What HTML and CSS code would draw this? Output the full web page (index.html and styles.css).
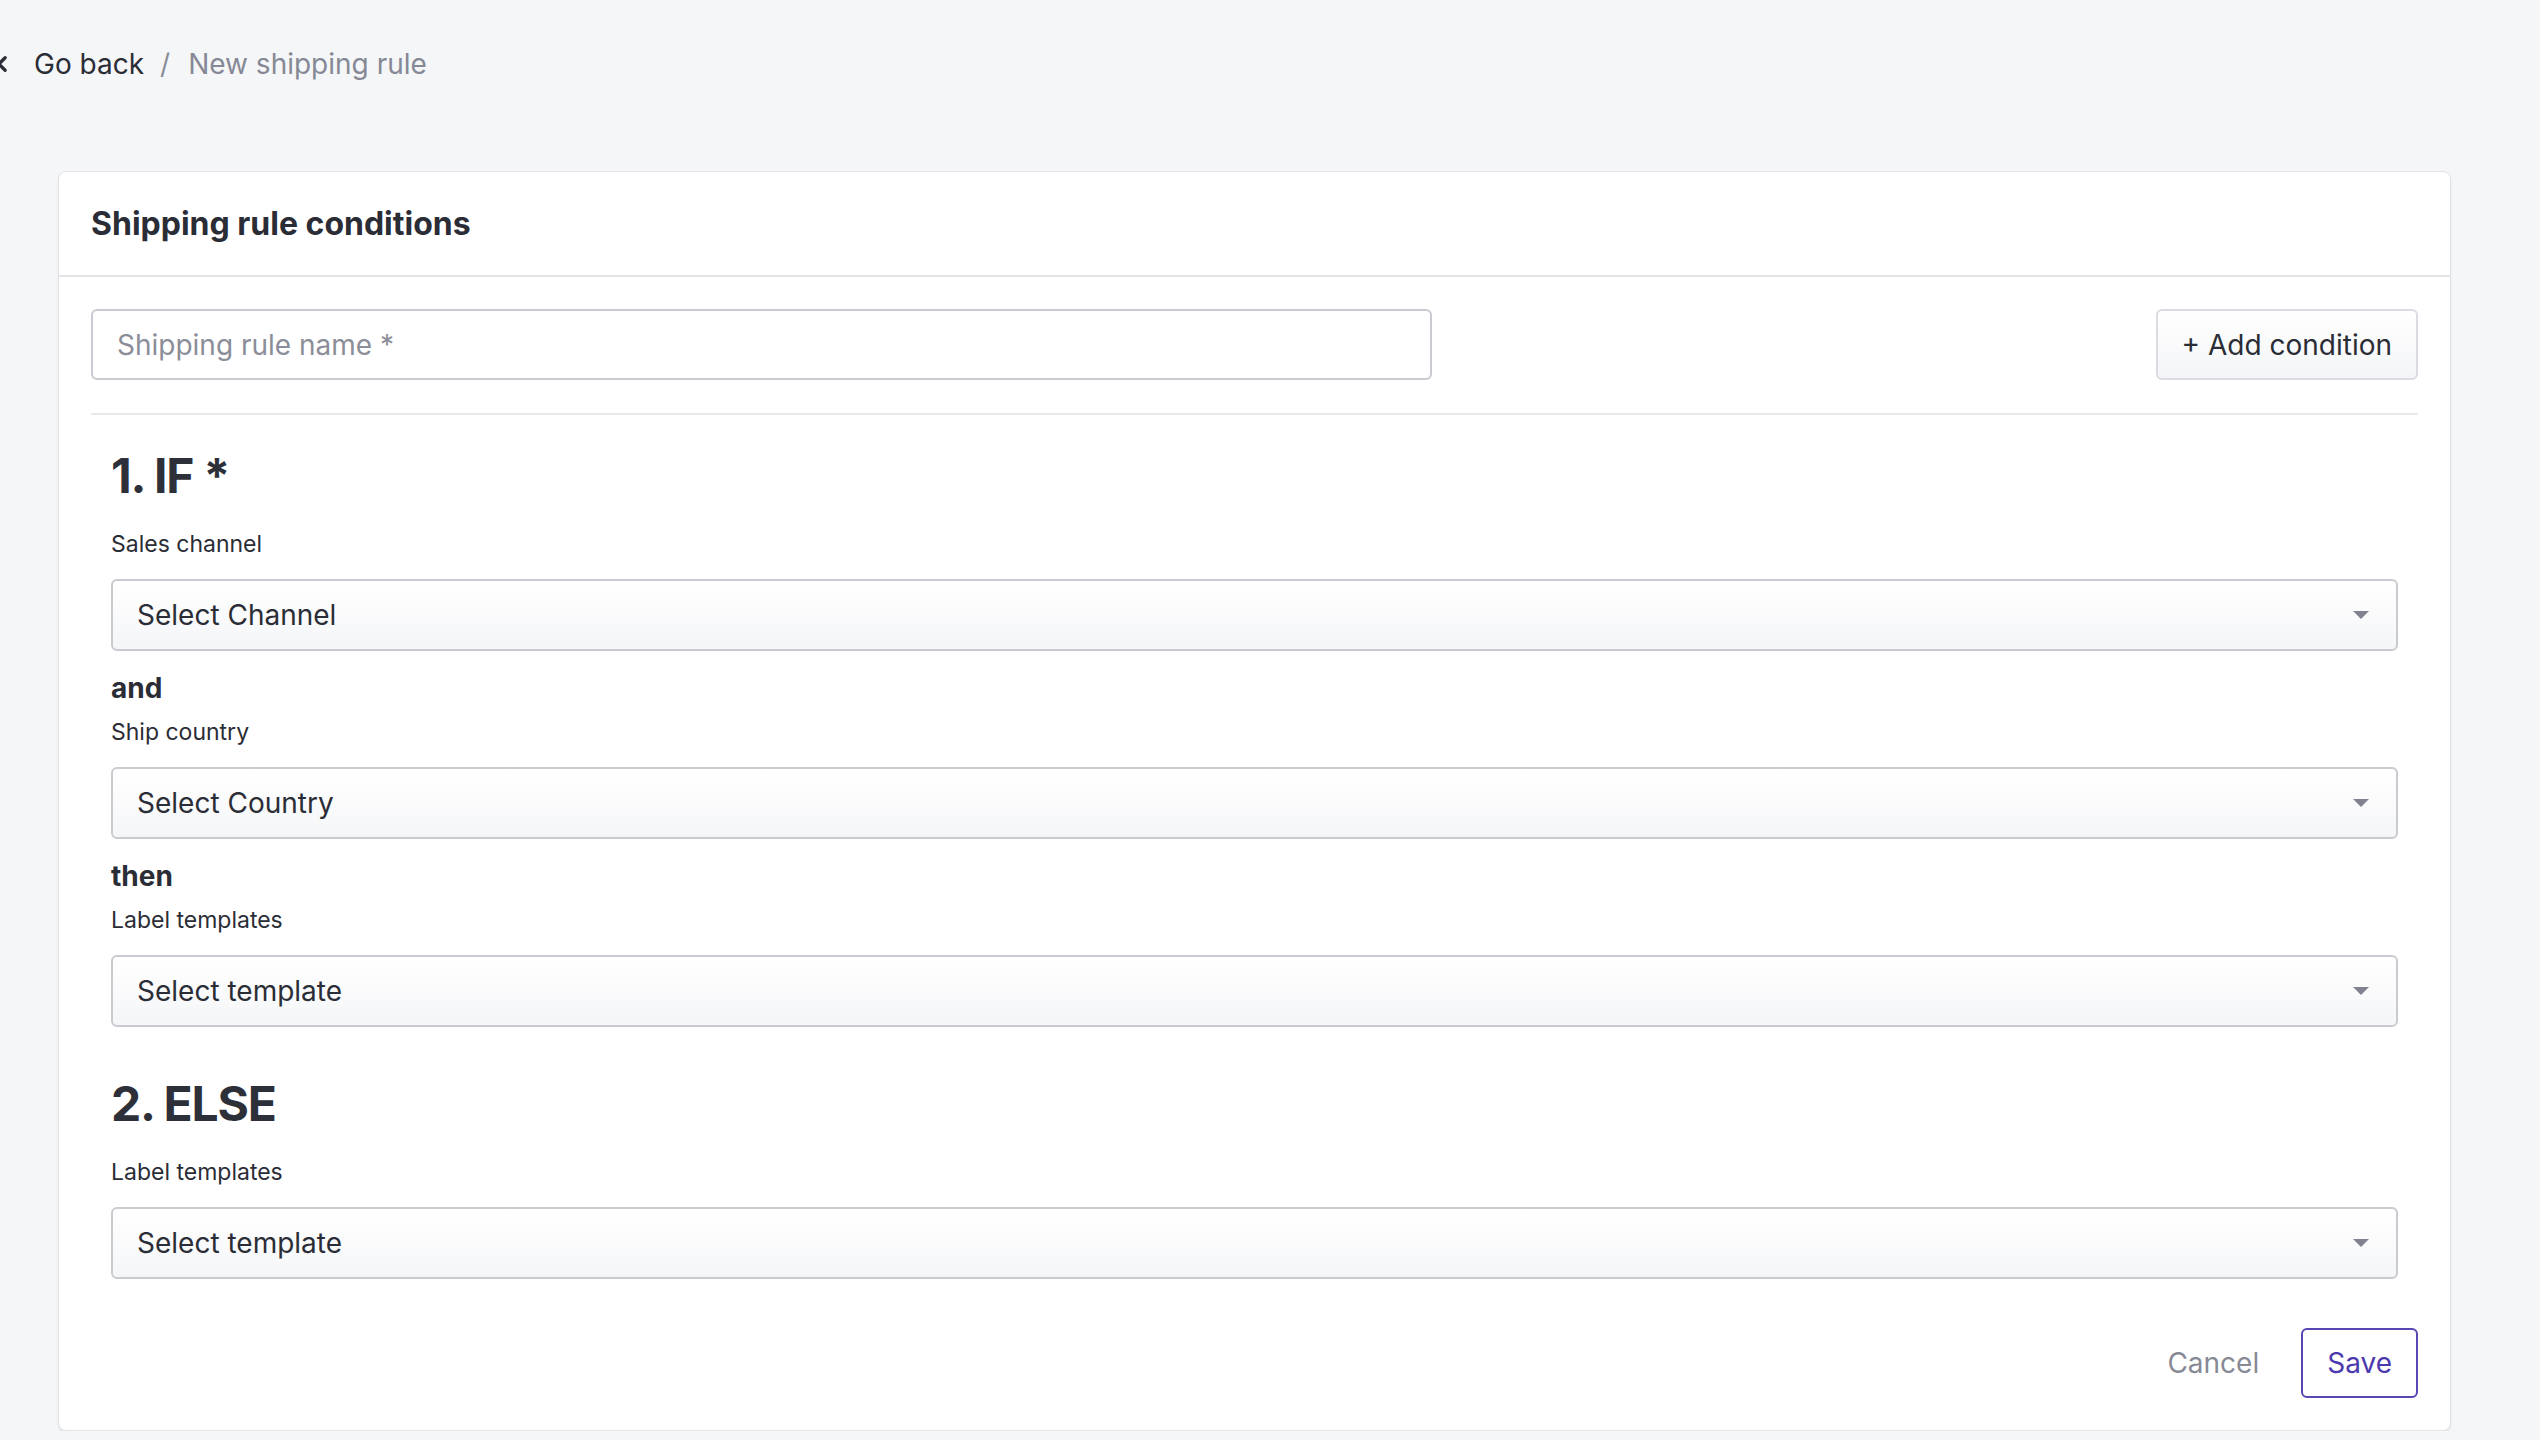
FILE: index.html
```html
<!DOCTYPE html>
<html lang="en">
<head>
  <meta charset="UTF-8" />
  <title>New shipping rule</title>
  <link rel="stylesheet" href="styles.css">
</head>
<body>

  <nav class="crumbs">
    <a href="#" class="crumbs-back">
      <svg class="chevron" viewBox="0 0 16 16" width="16" height="16"><path d="M10.5 3 L5.5 8 L10.5 13" fill="none" stroke="#2b2d36" stroke-width="2.6" stroke-linecap="round" stroke-linejoin="round"/></svg>
      Go back
    </a>
    <span class="crumbs-sep">/</span>
    <span class="crumbs-current">New shipping rule</span>
  </nav>

  <section class="card">
    <header class="card-head">
      <h1>Shipping rule conditions</h1>
    </header>

    <div class="card-body">
      <div class="name-row">
        <input type="text" class="name-input" placeholder="Shipping rule name *" />
        <button class="btn-add">+ Add condition</button>
      </div>

      <div class="rule">
        <h2>1. IF *</h2>
        <label class="field-label">Sales channel</label>
        <div class="select"><span>Select Channel</span><i class="caret"></i></div>

        <p class="joiner">and</p>
        <label class="field-label">Ship country</label>
        <div class="select"><span>Select Country</span><i class="caret"></i></div>

        <p class="joiner">then</p>
        <label class="field-label">Label templates</label>
        <div class="select"><span>Select template</span><i class="caret"></i></div>

        <h2 class="else">2. ELSE</h2>
        <label class="field-label">Label templates</label>
        <div class="select"><span>Select template</span><i class="caret"></i></div>
      </div>

      <div class="actions">
        <button class="btn-cancel">Cancel</button>
        <button class="btn-save">Save</button>
      </div>
    </div>
  </section>

</body>
</html>
```

FILE: styles.css
```css
body {
  margin: 0;
  padding: 0 89px 0 58px;
  background: #f5f6f8;
  color: #2b2d36;
  font-family: Inter, "Noto Sans", sans-serif;
}
.crumbs {
  display: flex;
  align-items: center;
  height: 128px;
  margin-left: -66px;
  font-size: 28px;
}
.crumbs-back {
  display: flex;
  align-items: center;
  gap: 22px;
  color: #2b2d36;
  text-decoration: none;
}
.chevron {
  width: 20px;
  height: 20px;
}
.crumbs-sep {
  margin: 0 18px 0 16px;
  color: #8a8d98;
}
.crumbs-current {
  color: #868995;
}
.card {
  margin-top: 43px;
  background: #fff;
  border: 1px solid #e2e3e7;
  border-radius: 8px;
  box-shadow: 0 2px 2px rgba(20, 22, 40, 0.08);
}
.card-head {
  height: 103px;
  display: flex;
  align-items: center;
  padding: 0 32px;
  border-bottom: 2px solid #e4e5e9;
}
.card-head h1 {
  margin: 0;
  font-size: 32px;
  font-weight: 700;
}
.card-body {
  padding: 32px 32px 32px 32px;
}
.name-row {
  display: flex;
  justify-content: space-between;
  align-items: center;
  padding-bottom: 33px;
  border-bottom: 2px solid #e8e9ec;
}
.name-input {
  width: 1341px;
  height: 71px;
  box-sizing: border-box;
  padding: 0 24px;
  border: 2px solid #c9cbd1;
  border-radius: 6px;
  font-family: Inter, sans-serif;
  font-size: 28px;
  color: #2b2d36;
}
.name-input::placeholder {
  color: #8b8e98;
}
.btn-add {
  height: 71px;
  padding: 0 24px;
  border: 2px solid #dadce1;
  border-radius: 6px;
  background: linear-gradient(#fff, #f4f5f7);
  font-family: Inter, sans-serif;
  font-size: 28px;
  color: #2b2d36;
}
.rule {
  padding: 0 20px;
}
.rule h2 {
  margin: 33px 0 0 0;
  line-height: 56px;
  font-size: 48px;
  font-weight: 700;
  letter-spacing: -1.2px;
  color: #2e3039;
}
.rule h2.else {
  margin-top: 49px;
}
.field-label {
  display: block;
  margin-top: 24px;
  font-size: 23px;
  line-height: 32px;
  color: #2b2d36;
}
.select {
  display: flex;
  justify-content: space-between;
  align-items: center;
  height: 72px;
  box-sizing: border-box;
  margin-top: 19px;
  padding: 0 24px 0 24px;
  border: 2px solid #c9cbd1;
  border-radius: 6px;
  background: linear-gradient(#fff, #f5f6f8);
  font-size: 28px;
  color: #2b2d36;
}
.caret {
  width: 0;
  height: 0;
  margin-right: 3px;
  border-left: 8px solid transparent;
  border-right: 8px solid transparent;
  border-top: 8px solid #80838f;
}
.joiner {
  margin: 21px 0 0 0;
  font-size: 28px;
  line-height: 32px;
  font-weight: 700;
}
.joiner + .field-label {
  margin-top: 12px;
}
.actions {
  display: flex;
  justify-content: flex-end;
  align-items: center;
  gap: 26px;
  margin-top: 49px;
}
.btn-cancel {
  border: none;
  background: none;
  padding: 0 16px;
  font-family: Inter, sans-serif;
  font-size: 28px;
  color: #878a95;
}
.btn-save {
  height: 70px;
  padding: 0 24px;
  border: 2px solid #5a46b3;
  border-radius: 6px;
  background: #fff;
  font-family: Inter, sans-serif;
  font-size: 28px;
  color: #4b3aad;
}
```
